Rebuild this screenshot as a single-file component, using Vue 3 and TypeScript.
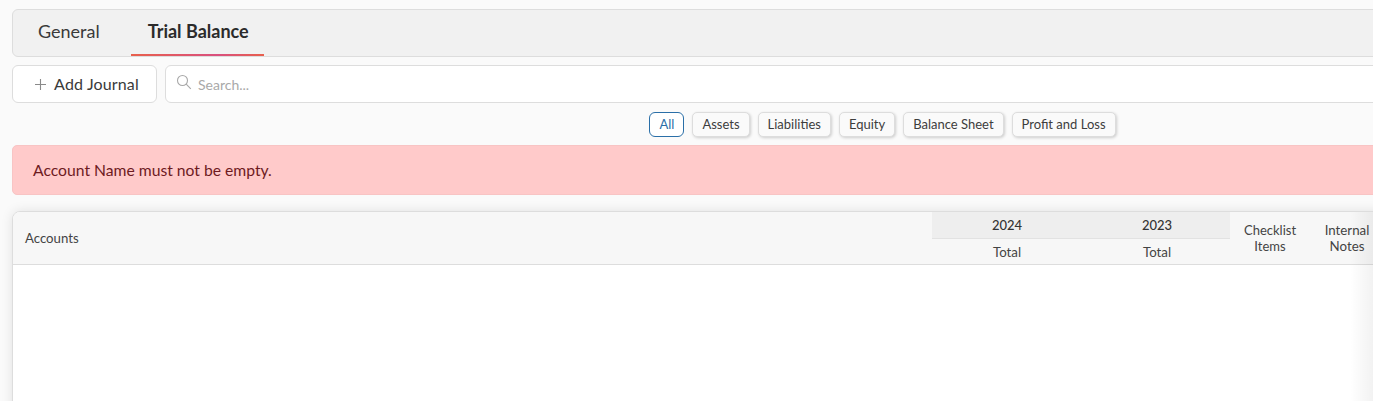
<script setup lang="ts">
const tabs = [
  { label: 'General', active: false },
  { label: 'Trial Balance', active: true }
]
const filters = ['All', 'Assets', 'Liabilities', 'Equity', 'Balance Sheet', 'Profit and Loss']
const years = ['2024', '2023']
</script>

<template>
  <div class="page">
    <div class="tabs">
      <div
        v-for="tab in tabs"
        :key="tab.label"
        class="tab"
        :class="{ active: tab.active }"
      >
        {{ tab.label }}
      </div>
    </div>

    <div class="toolbar">
      <button class="add-btn">
        <svg width="11" height="11" viewBox="0 0 11 11" class="plus">
          <path d="M5.5 0v11M0 5.5h11" stroke="#8a8a8a" stroke-width="1.1" fill="none" />
        </svg>
        Add Journal
      </button>
      <div class="search">
        <svg width="16" height="16" viewBox="0 0 16 16" class="search-icon">
          <circle cx="6.5" cy="6.5" r="5" stroke="#a8a8a8" stroke-width="1.1" fill="none" />
          <path d="M10.2 10.2l4.6 4.6" stroke="#a8a8a8" stroke-width="1.1" fill="none" />
        </svg>
        <span class="placeholder">Search...</span>
      </div>
    </div>

    <div class="filters">
      <button
        v-for="(filter, i) in filters"
        :key="filter"
        class="filter"
        :class="{ selected: i === 0 }"
      >
        {{ filter }}
      </button>
    </div>

    <div class="alert">Account Name must not be empty.</div>

    <div class="card">
      <div class="thead">
        <div class="th-accounts">Accounts</div>
        <div v-for="year in years" :key="year" class="th-year">
          <div class="year">{{ year }}</div>
          <div class="total">Total</div>
        </div>
        <div class="th-check">Checklist<br>Items</div>
        <div class="th-notes">Internal<br>Notes</div>
      </div>
    </div>

    <div class="edge-shadow"></div>
  </div>
</template>

<style>
html, body {
  margin: 0;
  height: 401px;
  overflow: hidden;
  background: #fafafa;
}
</style>

<style scoped>
.page {
  position: relative;
  box-sizing: border-box;
  width: 1764px;
  height: 401px;
  padding: 9px 12px 0;
  overflow: hidden;
  font-family: Lato, "Open Sans", sans-serif;
  color: #333;
}
.tabs {
  display: flex;
  box-sizing: border-box;
  height: 48px;
  padding-left: 8px;
  gap: 15.5px;
  background: #f1f1f1;
  border: 1px solid #ddd;
  border-radius: 6px;
}
.tab {
  padding: 0 15.5px 0 17px;
  height: 46px;
  line-height: 43px;
  font-size: 18px;
  color: #3a3a3a;
  box-sizing: border-box;
}
.tab.active {
  font-weight: 700;
  color: #2b2b2b;
  border-bottom: 2px solid;
  border-image: linear-gradient(90deg, #e8604c, #d9507e 65%, #e8604c) 1;
}
.toolbar {
  display: flex;
  gap: 8px;
  margin-top: 8px;
}
.add-btn {
  display: flex;
  align-items: center;
  justify-content: center;
  gap: 8px;
  box-sizing: border-box;
  width: 145px;
  height: 38px;
  background: #fff;
  border: 1px solid #ddd;
  border-radius: 6px;
  font-family: inherit;
  font-size: 16px;
  letter-spacing: .15px;
  color: #3a3a3a;
  padding: 0 0 2px 5px;
}
.plus {
  margin-top: 2px;
}
.search {
  flex: 1;
  display: flex;
  align-items: center;
  box-sizing: border-box;
  height: 38px;
  padding-left: 10px;
  background: #fff;
  border: 1px solid #ddd;
  border-radius: 6px;
}
.search-icon {
  margin-top: -5px;
}
.placeholder {
  margin-left: 6px;
  font-size: 14px;
  color: #a9a9a9;
}
.filters {
  display: flex;
  justify-content: center;
  gap: 8px;
  margin-top: 9px;
  padding-left: 1px;
}
.filter {
  box-sizing: border-box;
  height: 25px;
  padding: 0 9px 2px;
  background: #fafafa;
  border: 1px solid #ddd;
  border-radius: 5px;
  box-shadow: 1px 1px 3px rgb(0 0 0 / 18%);
  font-family: inherit;
  font-size: 13px;
  color: #3d3d3d;
}
.filter.selected {
  background: #fff;
  border-color: #2a6fa8;
  border-radius: 6px;
  box-shadow: none;
  color: #2a6fa8;
}
.alert {
  box-sizing: border-box;
  height: 50px;
  margin-top: 8px;
  padding-left: 20px;
  line-height: 48px;
  background: #ffcaca;
  border: 1px solid #f8c4c4;
  border-radius: 5px;
  font-size: 15.7px;
  color: #6e1a1f;
}
.card {
  box-sizing: border-box;
  height: 300px;
  margin-top: 16px;
  background: #fff;
  border: 1px solid #ddd;
  border-radius: 8px;
  box-shadow: 0 0 12px rgb(0 0 0 / 10%);
  overflow: hidden;
}
.thead {
  display: grid;
  grid-template-columns: 919px 150px 148px 80px 76px 1fr;
  box-sizing: border-box;
  height: 53px;
  background: #f7f7f7;
  border-bottom: 1px solid #ddd;
  font-size: 13.3px;
  text-align: center;
  color: #444;
}
.th-accounts {
  text-align: left;
  padding-left: 12px;
  line-height: 53px;
  font-size: 13.2px;
}
.th-year {
  display: flex;
  flex-direction: column;
}
.th-year + .th-year > div {
  padding-left: 2px;
}
.year {
  height: 27px;
  line-height: 26px;
  background: #eeeeee;
  border-bottom: 1px solid #e2e2e2;
  box-sizing: border-box;
  font-weight: 500;
  font-size: 13px;
  color: #333;
}
.total {
  line-height: 26px;
}
.th-check,
.th-notes {
  align-self: center;
  line-height: 16px;
  margin-top: -2px;
}
.th-check {
  font-size: 13px;
}
.th-notes {
  padding-right: 2px;
}
.edge-shadow {
  position: absolute;
  left: 1350px;
  top: 212px;
  width: 23px;
  height: 189px;
  background: linear-gradient(90deg, rgb(0 0 0 / 0), rgb(0 0 0 / 5%));
  pointer-events: none;
}
</style>
